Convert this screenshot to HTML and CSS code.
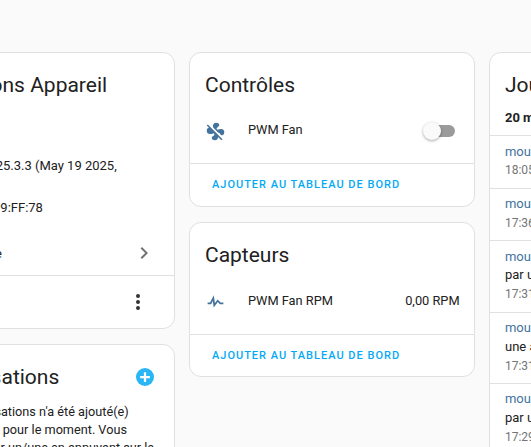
FILE: index.html
```html
<!DOCTYPE html>
<html lang="fr">
<head>
<meta charset="utf-8">
<title>PWM Fan</title>
<link rel="stylesheet" href="styles.css">
</head>
<body>
<main class="columns">
  <section class="column">
    <article class="card card-info">
      <h2 class="title">Informations Appareil</h2>
      <div class="info-lines">
        <p class="info-line">Firmware : v. 2025.3.3 (May 19 2025,<br>18:29:04)</p>
        <p class="info-line">MAC 00:1A:2B:D9:FF:78</p>
      </div>
      <div class="link-row">
        <span>Visiter l'interface</span>
        <svg class="chevron" viewBox="0 0 24 24"><path d="M8.59,16.58L13.17,12L8.59,7.41L10,6L16,12L10,18L8.59,16.58Z"/></svg>
      </div>
      <div class="card-foot foot-end">
        <svg class="dots" viewBox="0 0 24 24"><path d="M12,16A2,2 0 0,1 14,18A2,2 0 0,1 12,20A2,2 0 0,1 10,18A2,2 0 0,1 12,16M12,10A2,2 0 0,1 14,12A2,2 0 0,1 12,14A2,2 0 0,1 10,12A2,2 0 0,1 12,10M12,4A2,2 0 0,1 14,6A2,2 0 0,1 12,8A2,2 0 0,1 10,6A2,2 0 0,1 12,4Z"/></svg>
      </div>
    </article>
    <article class="card card-auto">
      <div class="auto-head">
        <h2 class="title">Automatisations</h2>
        <svg class="plus" viewBox="0 0 24 24"><circle cx="12" cy="12" r="12"/><path class="plus-mark" d="M10.5 5.5h3v5h5v3h-5v5h-3v-5h-5v-3h5z"/></svg>
      </div>
      <p class="auto-text">Aucun automatisations n'a été ajouté(e)<br>pour cet appareil pour le moment. Vous<br>pouvez en ajouter un/une en appuyant sur le</p>
    </article>
  </section>

  <section class="column">
    <article class="card">
      <h2 class="title">Contrôles</h2>
      <div class="entity">
        <svg class="entity-icon" viewBox="0 0 24 24"><path d="M12.5 2C9.64 2 8.57 4.55 9.29 7.47L15 13.16C15.87 13.37 16.81 13.81 17.28 14.73C18.46 17.1 22.03 17 22.03 12.5C22.03 8.92 18.05 8.13 14.35 10.13C14.03 9.73 13.61 9.42 13.13 9.22C13.32 8.29 13.76 7.24 14.75 6.75C17.11 5.57 17 2 12.5 2M3.28 4L2 5.27L4.47 7.73C3.22 7.74 2 8.87 2 11.5C2 15.07 5.96 15.85 9.65 13.87C9.97 14.27 10.4 14.59 10.89 14.79C10.69 15.71 10.25 16.75 9.27 17.24C6.91 18.42 7 22 11.5 22C13.8 22 14.94 20.36 14.94 18.21L18.73 22L20 20.73L3.28 4Z"/></svg>
        <span class="entity-name">PWM Fan</span>
        <span class="toggle"><span class="toggle-thumb"></span></span>
      </div>
      <div class="card-foot"><span class="action">Ajouter au tableau de bord</span></div>
    </article>
    <article class="card card-sensor">
      <h2 class="title">Capteurs</h2>
      <div class="entity">
        <svg class="entity-icon" viewBox="0 0 24 24"><path d="M3,13H5.79L10.1,4.79L11.28,13.75L14.5,9.66L17.83,13H21V15H17L14.67,12.67L9.92,18.73L8.94,11.31L7,15H3V13Z"/></svg>
        <span class="entity-name">PWM Fan RPM</span>
        <span class="entity-value">0,00 RPM</span>
      </div>
      <div class="card-foot"><span class="action">Ajouter au tableau de bord</span></div>
    </article>
  </section>

  <section class="column">
    <article class="card card-log">
      <h2 class="title">Journal</h2>
      <div class="log-date">20 mai 2025</div>
      <div class="log-row"><div class="log-link">mouvement PWM Fan</div><div class="log-time">18:05:12</div></div>
      <div class="log-row"><div class="log-link">mouvement PWM Fan</div><div class="log-time">17:36:40</div></div>
      <div class="log-row"><div class="log-link">mouvement PWM Fan</div><div>par une action</div><div class="log-time">17:31:22</div></div>
      <div class="log-row"><div class="log-link">mouvement PWM Fan</div><div>une action</div><div class="log-time">17:31:05</div></div>
      <div class="log-row"><div class="log-link">mouvement PWM Fan</div><div>par une action</div><div class="log-time">17:29:48</div></div>
    </article>
  </section>
</main>
</body>
</html>
```
FILE: styles.css
```css
html, body {
  margin: 0;
  height: 100%;
  overflow: hidden;
  background: #fafafa;
}
body {
  font-family: Roboto, "Liberation Sans", sans-serif;
  font-size: 13px;
  color: #212121;
}
.columns {
  display: flex;
  gap: 14.4px;
  margin-left: -111px;
  padding-top: 52px;
  width: 885px;
}
.column {
  width: 285.6px;
  flex: none;
  display: flex;
  flex-direction: column;
  gap: 15px;
}
.card {
  background: #fff;
  border: 1px solid #e0e0e0;
  border-radius: 12px;
  box-sizing: border-box;
}
.title {
  margin: 0;
  font-size: 21px;
  font-weight: 400;
  line-height: 32px;
  padding: 16px 15px 0;
}
.entity {
  display: flex;
  align-items: center;
  height: 60px;
  padding: 0 14px 2px 15px;
  font-size: 12.8px;
}
.card-sensor .entity {
  height: 61px;
}
.entity-icon {
  width: 21px;
  height: 21px;
  fill: #44739e;
  flex: none;
}
.entity-name {
  margin-left: 22px;
  flex: 1;
  padding-bottom: 3px;
}
.entity-value {
  padding-bottom: 3px;
}
.toggle {
  position: relative;
  width: 27px;
  height: 12px;
  margin-right: 5px;
  border-radius: 6px;
  background: #9b9b9b;
}
.toggle-thumb {
  position: absolute;
  left: -5px;
  top: -3px;
  width: 18px;
  height: 18px;
  border-radius: 50%;
  background: #fafafa;
  box-shadow: 0 1px 3px rgba(0, 0, 0, .35);
}
.card-foot {
  border-top: 1px solid #e0e0e0;
  height: 43px;
  padding: 0 22px 1px;
  box-sizing: border-box;
  display: flex;
  align-items: center;
}
.card-sensor .card-foot {
  height: 42px;
}
.action {
  color: #03a9f4;
  font-size: 11px;
  font-weight: 500;
  letter-spacing: 1px;
  text-transform: uppercase;
}
.card-info {
  height: 277px;
  display: flex;
  flex-direction: column;
}
.info-lines {
  flex: 1;
  padding: 55px 15px 0;
  white-space: nowrap;
}
.info-line {
  margin: 0 0 4px;
  line-height: 19px;
}
.link-row {
  height: 44px;
  padding: 0 18px 0 15px;
  display: flex;
  align-items: center;
  justify-content: space-between;
}
.chevron {
  width: 24px;
  height: 24px;
  fill: #727272;
}
.foot-end {
  height: 53px;
  justify-content: flex-end;
  padding: 0 24px;
}
.dots {
  width: 24px;
  height: 24px;
  fill: #333;
}
.auto-head {
  display: flex;
  align-items: center;
  justify-content: space-between;
  padding-right: 19.5px;
}
.plus {
  width: 18px;
  height: 18px;
  fill: #29b6f6;
  margin-top: 16px;
}
.plus-mark {
  fill: #fff;
}
.auto-text {
  margin: 10px 0 0;
  padding: 0 15px;
  font-size: 12.7px;
  line-height: 18px;
  white-space: nowrap;
}
.card-log {
  height: 420px;
  overflow: hidden;
  white-space: nowrap;
}
.log-date {
  height: 34px;
  padding: 8px 15px 0;
  box-sizing: border-box;
  font-weight: 700;
  line-height: 18px;
}
.log-row {
  border-top: 1px solid #e0e0e0;
  padding: 6.5px 15px 7.5px;
  line-height: 18.8px;
}
.log-link {
  color: #44739e;
}
.log-time {
  color: #757575;
  font-size: 12px;
}
```
